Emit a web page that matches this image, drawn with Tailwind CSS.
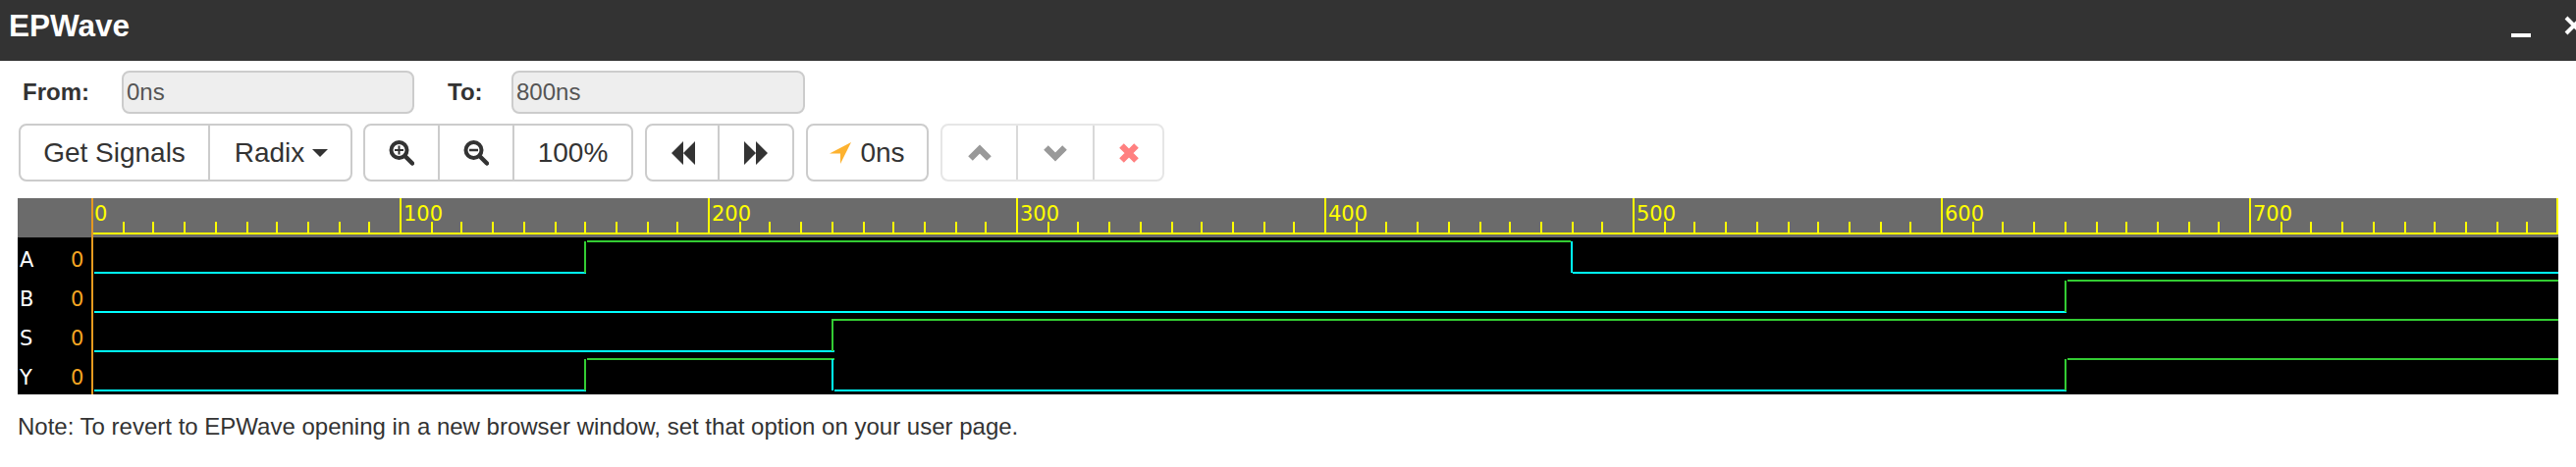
<!DOCTYPE html>
<html lang="en">
<head>
  <meta charset="UTF-8">
  <title>EPWave</title>
  <script src="https://cdn.jsdelivr.net/npm/@tailwindcss/browser@4"></script>
</head>
<body class="bg-white font-['Liberation_Sans',Arial,sans-serif] text-[#333] overflow-hidden">
  <!-- Title bar -->
  <header class="flex h-[62px] bg-[#333]">
    <h1 class="pl-[9px] pt-[10px] text-[31.500px] leading-[32px] font-bold text-white">EPWave</h1>
    <svg class="ml-auto" width="74" height="62" viewBox="2550 0 74 62" fill="none" stroke="#fff">
      <path d="M2558 36h20" stroke-width="4"/>
      <path d="M2614 18l16 16M2630 18l-16 16" stroke-width="4"/>
    </svg>
  </header>

  <!-- Range -->
  <div class="mt-[10px] flex h-[44px] items-center">
    <label class="ml-[23px] w-[101px] text-2xl font-bold">From:</label>
    <input class="h-[44px] w-[298px] rounded-lg border-2 border-[#ccc] bg-[#eee] pl-[3px] text-2xl text-[#555]" value="0ns" disabled>
    <label class="ml-[34px] w-[65px] text-2xl font-bold">To:</label>
    <input class="h-[44px] w-[299px] rounded-lg border-2 border-[#ccc] bg-[#eee] pl-[3px] text-2xl text-[#555]" value="800ns" disabled>
  </div>

  <!-- Toolbar -->
  <div class="ml-[19px] mt-[10px] flex h-[59px] text-[28px]">
    <div class="flex rounded-lg border-2 border-[#ccc]">
      <button class="w-[193px] border-r-2 border-[#ccc]">Get Signals</button>
      <button class="flex w-[143px] items-center justify-center gap-[8px] pl-[2px]">Radix
        <svg width="16" height="8" viewBox="0 0 16 8"><path d="M0 0h16L8 8z" fill="#333"/></svg>
      </button>
    </div>
    <div class="ml-[11px] flex rounded-lg border-2 border-[#ccc]">
      <button class="flex w-[76px] items-center justify-center border-r-2 border-[#ccc]">
        <svg width="26" height="28" viewBox="0 0 26 28" fill="none" stroke="#333">
          <circle cx="10.500" cy="11" r="8" stroke-width="4"/>
          <path d="M16.500 17l7.500 7.500" stroke-width="4.500" stroke-linecap="round"/>
          <path d="M10.500 6.500v9M6 11h9" stroke-width="2"/>
        </svg>
      </button>
      <button class="flex w-[76px] items-center justify-center border-r-2 border-[#ccc]">
        <svg width="26" height="28" viewBox="0 0 26 28" fill="none" stroke="#333">
          <circle cx="10.500" cy="11" r="8" stroke-width="4"/>
          <path d="M16.500 17l7.500 7.500" stroke-width="4.500" stroke-linecap="round"/>
          <path d="M6 11h9" stroke-width="2.500"/>
        </svg>
      </button>
      <button class="w-[119px]">100%</button>
    </div>
    <div class="ml-[12px] flex rounded-lg border-2 border-[#ccc]">
      <button class="flex w-[74px] items-center justify-center border-r-2 border-[#ccc] pl-[2px]">
        <svg width="24" height="24" viewBox="0 0 24 24" fill="#333"><path d="M0 12L12 0v24zM12 12L24 0v24z"/></svg>
      </button>
      <button class="flex w-[74px] items-center justify-center">
        <svg width="24" height="24" viewBox="0 0 24 24" fill="#333"><path d="M0 0l12 12L0 24zM12 0l12 12-12 12z"/></svg>
      </button>
    </div>
    <div class="ml-[12px] flex rounded-lg border-2 border-[#ccc]">
      <button class="flex w-[121px] items-center justify-center gap-[9px]">
        <svg width="22" height="22" viewBox="0 0 22 22"><path d="M22 0L11 22V11.500H0z" fill="#fdb22f"/></svg>
        <span>0ns</span>
      </button>
    </div>
    <div class="ml-[12px] flex rounded-lg border-2 border-[#e6e6e6]">
      <button class="flex w-[77px] items-center justify-center border-r-2 border-[#d9d9d9]">
        <svg width="26" height="18" viewBox="0 0 26 18" fill="none"><path d="M3.500 14.500L13 5l9.500 9.500" stroke="#999" stroke-width="6.500"/></svg>
      </button>
      <button class="flex w-[78px] items-center justify-center border-r-2 border-[#d9d9d9]">
        <svg width="26" height="18" viewBox="0 0 26 18" fill="none"><path d="M3.500 3.500L13 13l9.500-9.500" stroke="#999" stroke-width="6.500"/></svg>
      </button>
      <button class="flex w-[69px] items-center justify-center">
        <svg width="20" height="20" viewBox="0 0 20 20" fill="none"><path d="M2.500 2.500l15 15M17.500 2.500l-15 15" stroke="#ff8080" stroke-width="6.500"/></svg>
      </button>
    </div>
  </div>

  <!-- Waveform viewer -->
  <div class="ml-[18px] mt-[17px] h-[200px] w-[2588px] bg-black">
    <svg class="block" width="2588" height="200" viewBox="18 202 2588 200" fill="none" font-family="'DejaVu Sans',sans-serif" font-size="21">
      <rect x="18" y="202" width="2588" height="40" fill="#6b6b6b"/>

      <!-- ruler: one decade is 314px, minor ticks rounded as the original draws them -->
      <g stroke="#ffff00" stroke-width="2">
        <path d="M95 238H2606"/>
        <g id="decade">
          <path d="M126 226v12M156 226v12M188 226v12M220 226v12M252 226v12M282 226v12M314 226v12M346 226v12M376 226v12"/>
          <path d="M408 202v36"/>
        </g>
        <use href="#decade" x="314"/>
        <use href="#decade" x="628"/>
        <use href="#decade" x="942"/>
        <use href="#decade" x="1256"/>
        <use href="#decade" x="1570"/>
        <use href="#decade" x="1884"/>
        <path d="M2324 226v12M2354 226v12M2386 226v12M2418 226v12M2450 226v12M2480 226v12M2512 226v12M2544 226v12M2574 226v12"/>
        <path d="M2605 202v36"/>
      </g>
      <g fill="#ffff00" stroke="none">
        <text x="96" y="225">0</text>
        <text x="411" y="225">100</text>
        <text x="725" y="225">200</text>
        <text x="1039" y="225">300</text>
        <text x="1353" y="225">400</text>
        <text x="1667" y="225">500</text>
        <text x="1981" y="225">600</text>
        <text x="2295" y="225">700</text>
      </g>

      <!-- signal names and values -->
      <g fill="#fff" stroke="none">
        <text x="20" y="272">A</text>
        <text x="20" y="312">B</text>
        <text x="20" y="352">S</text>
        <text x="20" y="392">Y</text>
      </g>
      <g fill="#f5a623" stroke="none">
        <text x="72" y="272">0</text>
        <text x="72" y="312">0</text>
        <text x="72" y="352">0</text>
        <text x="72" y="392">0</text>
      </g>
      <path d="M94 202V402" stroke="#e69a1f" stroke-width="2"/>

      <!-- A -->
      <path d="M96 278H597M1602 278H2606" stroke="#00ffff" stroke-width="2"/>
      <path d="M596 278V246M598 246H1600" stroke="#33cc33" stroke-width="2"/>
      <path d="M1601 246V278" stroke="#00ffff" stroke-width="2"/>
      <!-- B -->
      <path d="M96 318H2105" stroke="#00ffff" stroke-width="2"/>
      <path d="M2104 318V286M2106 286H2606" stroke="#33cc33" stroke-width="2"/>
      <!-- S -->
      <path d="M96 358H850" stroke="#00ffff" stroke-width="2"/>
      <path d="M848 358V326H2606" stroke="#33cc33" stroke-width="2"/>
      <!-- Y -->
      <path d="M96 398H597M850 398H2105" stroke="#00ffff" stroke-width="2"/>
      <path d="M596 398V366M598 366H850M2104 398V366M2106 366H2606" stroke="#33cc33" stroke-width="2"/>
      <path d="M848 366V398" stroke="#00ffff" stroke-width="2"/>
    </svg>
  </div>

  <p class="ml-[18px] mt-[20px] text-2xl leading-[26px]">Note: To revert to EPWave opening in a new browser window, set that option on your user page.</p>
</body>
</html>
